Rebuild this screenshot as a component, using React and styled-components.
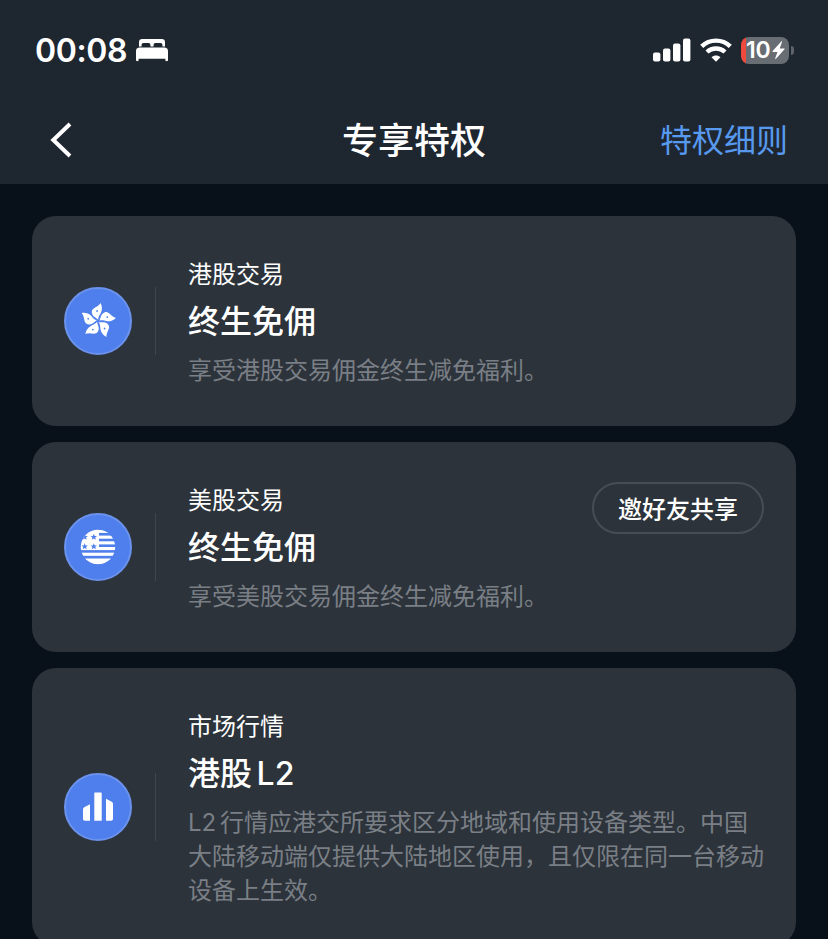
import React from 'react';
import styled, { createGlobalStyle } from 'styled-components';

const theme = {
  header: '#1e262f',
  page: '#08101a',
  card: '#2c333a',
  blue: '#4f7fec',
  link: '#5799ee',
  muted: '#7a7f86',
};

const cards = [
  {
    id: 'hk',
    icon: 'bauhinia',
    label: '港股交易',
    title: '终生免佣',
    text: '享受港股交易佣金终生减免福利。',
  },
  {
    id: 'us',
    icon: 'flag',
    label: '美股交易',
    title: '终生免佣',
    text: '享受美股交易佣金终生减免福利。',
    action: '邀好友共享',
  },
  {
    id: 'quote',
    icon: 'bars',
    label: '市场行情',
    title: '港股 L2',
    text: 'L2 行情应港交所要求区分地域和使用设备类型。中国大陆移动端仅提供大陆地区使用，且仅限在同一台移动设备上生效。',
  },
];

const BedIcon = () => (
  <svg width="34" height="24" viewBox="0 0 34 24" fill="#fff">
    <path d="M4 8.4V4.2C4 2 5.2 1 7.2 1h19.6C28.800 1 30 2 30 4.200v4.200h-2.600V7c0-1.200-.7-1.900-1.900-1.900h-5c-1.200 0-1.900.7-1.900 1.900v1.400h-3.200V7c0-1.200-.7-1.900-1.900-1.900h-5C7.300 5.100 6.600 5.800 6.600 7v1.400z" />
    <path d="M1 22V13c0-2.300 1.300-3.500 3.600-3.500h24.800c2.300 0 3.600 1.200 3.600 3.500v9c0 .8-.5 1.200-1.300 1.200s-1.300-.4-1.300-1.200v-1.200H3.600V22c0 .8-.5 1.200-1.300 1.200S1 22.800 1 22z" />
  </svg>
);

const SignalIcon = () => (
  <svg width="38" height="24" viewBox="0 0 38 24" fill="#fff">
    <rect x="0" y="14.500" width="7.400" height="9" rx="2" />
    <rect x="10" y="10.500" width="7.400" height="13" rx="2" />
    <rect x="20" y="5.500" width="7.400" height="18" rx="2" />
    <rect x="30" y="0.500" width="7.400" height="23" rx="2" />
  </svg>
);

const WifiIcon = () => (
  <svg width="32" height="24" viewBox="0 0 32 24" fill="none" stroke="#fff" strokeWidth="4.400">
    <path d="M1.700 8.400C9.600.700 22.400.700 30.300 8.400" />
    <path d="M7 14c5-4.700 13-4.700 18 0" />
    <path d="M16 23.800l-4.500-4.600c2.500-2.200 6.500-2.200 9 0z" fill="#fff" stroke="none" />
  </svg>
);

const BoltIcon = () => (
  <svg width="13" height="18" viewBox="0 0 13 18" fill="#fff">
    <path d="M9.300.5L.6 10.100c-.3.400-.1.800.4.800h4.500l-2.300 6.300c-.2.600.4.900.8.500l8.500-9.500c.3-.4.100-.8-.4-.8H7.700L10 1c.2-.6-.3-.9-.7-.5z" />
  </svg>
);

const BackIcon = () => (
  <svg width="24" height="38" viewBox="0 0 24 38" fill="none" stroke="#fff" strokeWidth="4">
    <path d="M22 3L5.300 19L22 35" strokeLinejoin="miter" />
  </svg>
);

const BauhiniaIcon = () => (
  <svg width="40" height="40" viewBox="-20 -20 40 40">
    {[0, 72, 144, 216, 288].map((angle) => (
      <g key={angle} transform={`rotate(${angle})`}>
        <path
          d="M.2-1.200C-1-3.200-6-4.200-6.200-8.800C-6.300-13.600-.2-13.400 2.600-18C4.200-14.500 4.400-11.300 2.900-8.200C1.700-5.800.2-4.600.2-1.200z"
          fill="#fff"
        />
        <circle cx="-.9" cy="-10" r=".9" fill={theme.blue} />
      </g>
    ))}
  </svg>
);

const star = 'M0-3.200L.9-1H3.200L1.400.500L2.100 2.800L0 1.400L-2.100 2.800L-1.400.500L-3.200-1H-.9z';

const FlagIcon = () => (
  <svg width="36" height="36" viewBox="-18 -18 36 36">
    <clipPath id="disc">
      <circle r="17.200" />
    </clipPath>
    <g clipPath="url(#disc)">
      <rect x="-18" y="-18" width="19" height="21" fill="#fff" />
      {[-17.200, -11.400, -5.700].map((y) => (
        <rect key={y} x="0" y={y} width="18" height="3.100" fill="#fff" />
      ))}
      {[0, 5.700, 11.500].map((y, i) => (
        <rect key={y} x="-18" y={y} width="36" height={i === 2 ? 6 : 3.100} fill="#fff" />
      ))}
      {[[-13.300, -10], [-4.200, -10], [-13.300, -0.500], [-4.200, -0.500]].map(([x, y]) => (
        <path key={`${x}${y}`} d={star} transform={`translate(${x} ${y})`} fill={theme.blue} />
      ))}
    </g>
  </svg>
);

const BarsIcon = () => (
  <svg width="32" height="30" viewBox="0 0 32 30" fill="#fff">
    <path d="M1 17.500c0-1 .4-1.700 1.200-2.200L8 12.200v16.500H3c-1.300 0-2-.7-2-2z" />
    <path d="M12.300 1.400c0-.7.400-1 1-1h5.400c.6 0 1 .3 1 1v27.300h-7.400z" />
    <path d="M24 6.800l5.700 3c.9.500 1.300 1.200 1.300 2.200v14.700c0 1.300-.7 2-2 2h-5z" />
  </svg>
);

const icons = { bauhinia: BauhiniaIcon, flag: FlagIcon, bars: BarsIcon };

const PrivilegeCard = ({ icon, label, title, text, action }) => {
  const Icon = icons[icon];
  return (
    <StyledCard>
      <IconCircle>
        <Icon />
      </IconCircle>
      <Divider />
      <CardBody>
        <CardLabel>{label}</CardLabel>
        <CardTitle>{title}</CardTitle>
        <CardText>{text}</CardText>
      </CardBody>
      {action && <ShareButton>{action}</ShareButton>}
    </StyledCard>
  );
};

export default function App() {
  return (
    <>
      <GlobalStyle />
      <Screen>
        <Header>
          <StatusBar>
            <StatusGroup $gap="8px">
              <Clock>00:08</Clock>
              <BedIcon />
            </StatusGroup>
            <StatusGroup $gap="9px">
              <SignalIcon />
              <WifiIcon />
              <Battery>
                <BatteryBody>
                  10
                  <BoltIcon />
                </BatteryBody>
                <BatteryTip />
              </Battery>
            </StatusGroup>
          </StatusBar>
          <NavBar>
            <BackButton aria-label="返回">
              <BackIcon />
            </BackButton>
            <NavTitle>专享特权</NavTitle>
            <NavLink>特权细则</NavLink>
          </NavBar>
        </Header>
        <CardList>
          {cards.map(({ id, ...card }) => (
            <PrivilegeCard key={id} {...card} />
          ))}
        </CardList>
      </Screen>
    </>
  );
}

const GlobalStyle = createGlobalStyle`
  * {
    box-sizing: border-box;
  }

  body {
    margin: 0;
    background: ${theme.page};
    overflow: hidden;
  }

  svg {
    display: block;
    flex-shrink: 0;
  }
`

const Screen = styled.div`
  height: 939px;
  overflow: hidden;
  background: ${theme.page};
  color: #fff;
  font-family: Inter, 'Noto Sans CJK SC', sans-serif;
`

const Header = styled.header`
  height: 184px;
  background: ${theme.header};
`

const StatusBar = styled.div`
  height: 96px;
  padding: 4px 34px 0 35px;
  display: flex;
  align-items: center;
  justify-content: space-between;
`

const StatusGroup = styled.div`
  display: flex;
  align-items: center;
  gap: ${(props) => props.$gap};
`

const Clock = styled.span`
  padding-top: 2px;
  font-size: 32px;
  font-weight: 600;
  line-height: 40px;
  letter-spacing: -0.4px;
`

const Battery = styled.div`
  display: flex;
  align-items: center;
  gap: 2px;
`

const BatteryBody = styled.div`
  width: 48px;
  height: 27px;
  padding-left: 5px;
  border-radius: 8px;
  display: flex;
  align-items: center;
  gap: 1px;
  background: linear-gradient(to right, #ee4b3e 5px, #686d73 5px);
  font-size: 23px;
  font-weight: 600;
  line-height: 27px;
  letter-spacing: -0.2px;
`

const BatteryTip = styled.div`
  width: 3px;
  height: 9px;
  border-radius: 0 4px 4px 0;
  background: #5d6268;
`

const NavBar = styled.nav`
  height: 88px;
  padding: 0 40px 0 48px;
  display: grid;
  grid-template-columns: 1fr auto 1fr;
  align-items: center;
`

const BackButton = styled.button`
  margin: 0;
  padding: 0;
  border: 0;
  background: none;
  justify-self: start;
`

const NavTitle = styled.h1`
  margin: 2px 4px 0 -4px;
  font-size: 36px;
  font-weight: 500;
  line-height: 48px;
`

const NavLink = styled.span`
  margin-top: 2px;
  justify-self: end;
  color: ${theme.link};
  font-size: 32px;
  line-height: 44px;
`

const CardList = styled.main`
  padding: 32px 32px 0;
  display: flex;
  flex-direction: column;
  gap: 16px;
`

const StyledCard = styled.section`
  padding: 40px 32px 39px;
  border-radius: 24px;
  display: flex;
  align-items: center;
  background: ${theme.card};
`

const IconCircle = styled.div`
  width: 68px;
  height: 68px;
  margin-bottom: 1px;
  border: 2px solid #6b92ec;
  border-radius: 50%;
  flex-shrink: 0;
  display: flex;
  align-items: center;
  justify-content: center;
  background: ${theme.blue};
`

const Divider = styled.div`
  width: 1px;
  height: 68px;
  margin: 0 32px 1px 23px;
  flex-shrink: 0;
  background: #3f464d;
`

const CardBody = styled.div`
  flex: 1;
  min-width: 0;
  margin-bottom: -1px;
`

const CardLabel = styled.div`
  padding-top: 1px;
  font-size: 24px;
  line-height: 36px;
`

const CardTitle = styled.h2`
  margin: 9px 0 12px;
  font-size: 32px;
  font-weight: 500;
  line-height: 40px;
  word-spacing: -4px;
`

const CardText = styled.p`
  margin: 0;
  color: ${theme.muted};
  font-size: 24px;
  line-height: 34px;
  word-spacing: -3px;
`

const ShareButton = styled.button`
  width: 172px;
  height: 52px;
  padding: 0 0 2px;
  border: 2px solid #474d54;
  border-radius: 26px;
  align-self: flex-start;
  background: none;
  color: #fff;
  font-family: inherit;
  font-size: 24px;
  font-weight: 500;
`
